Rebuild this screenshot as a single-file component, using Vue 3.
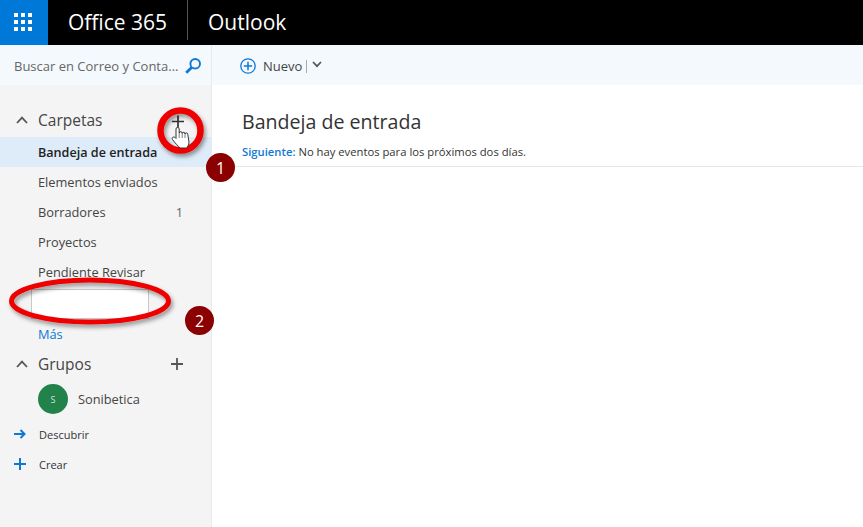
<script setup>
const folders = [
  { name: 'Bandeja de entrada', active: true },
  { name: 'Elementos enviados' },
  { name: 'Borradores', count: 1 },
  { name: 'Proyectos' },
  { name: 'Pendiente Revisar' }
]
</script>

<template>
  <div class="page">
    <header class="topbar">
      <div class="waffle">
        <svg width="18" height="18" viewBox="0 0 18 18" fill="#fff">
          <rect x="0" y="0" width="4" height="4" /><rect x="7" y="0" width="4" height="4" /><rect x="14" y="0" width="4" height="4" />
          <rect x="0" y="7" width="4" height="4" /><rect x="7" y="7" width="4" height="4" /><rect x="14" y="7" width="4" height="4" />
          <rect x="0" y="14" width="4" height="4" /><rect x="7" y="14" width="4" height="4" /><rect x="14" y="14" width="4" height="4" />
        </svg>
      </div>
      <div class="brand">Office 365</div>
      <div class="app">Outlook</div>
    </header>

    <div class="body">
      <aside class="sidebar">
        <div class="search">
          <span class="search_text">Buscar en Correo y Conta...</span>
          <svg width="16" height="16" viewBox="0 0 16 16" fill="none" stroke="#0f78d4">
            <circle cx="10.2" cy="5.8" r="4.8" stroke-width="1.9" />
            <path d="M6.6 9.4 1.2 14.8" stroke-width="2.8" />
          </svg>
        </div>

        <div class="section_head folders_head">
          <svg class="chevron" width="12" height="8" viewBox="0 0 12 8" fill="none" stroke="#555" stroke-width="1.8"><path d="M1 7l5-5.4L11 7" /></svg>
          <span class="section_title">Carpetas</span>
        </div>

        <div v-for="f in folders" :key="f.name" class="folder" :class="{ active: f.active }">
          <span>{{ f.name }}</span>
          <span v-if="f.count" class="count">{{ f.count }}</span>
        </div>

        <div class="new_folder"></div>
        <div class="more">Más</div>

        <div class="section_head groups_head">
          <svg class="chevron" width="12" height="8" viewBox="0 0 12 8" fill="none" stroke="#555" stroke-width="1.8"><path d="M1 7l5-5.4L11 7" /></svg>
          <span class="section_title">Grupos</span>
          <svg width="12" height="12" viewBox="0 0 12 12" stroke="#555" stroke-width="1.8"><path d="M6 0v12M0 6h12" /></svg>
        </div>

        <div class="group">
          <span class="avatar">S</span>
          <span class="group_name">Sonibetica</span>
        </div>

        <div class="link">
          <svg width="12" height="10" viewBox="0 0 12 10" fill="none" stroke="#0f78d4" stroke-width="2"><path d="M0 5h10.5M6.5 1l4 4-4 4" /></svg>
          <span>Descubrir</span>
        </div>
        <div class="link">
          <svg width="12" height="12" viewBox="0 0 12 12" stroke="#0f78d4" stroke-width="2"><path d="M6 0v12M0 6h12" /></svg>
          <span>Crear</span>
        </div>
      </aside>

      <main class="content">
        <div class="commands">
          <svg width="16" height="16" viewBox="0 0 16 16" fill="none" stroke="#0f78d4" stroke-width="1.3">
            <circle cx="8" cy="8" r="7.2" />
            <path d="M8 3.8v8.4M3.8 8h8.4" stroke-width="1.5" />
          </svg>
          <span class="new_label">Nuevo</span>
          <span class="divider"></span>
          <svg class="new_chevron" width="10" height="7" viewBox="0 0 10 7" fill="none" stroke="#555" stroke-width="1.7"><path d="M1 1l4 4.2L9 1" /></svg>
        </div>
        <div class="inbox_head">
          <h1>Bandeja de entrada</h1>
          <p><span class="next">Siguiente:</span> No hay eventos para los próximos dos días.</p>
        </div>
      </main>
    </div>

    <!-- red marks drawn over the screenshot -->
    <svg class="marks" width="863" height="527" viewBox="0 0 863 527" fill="none">
      <defs>
        <filter id="shadow" x="-20%" y="-20%" width="150%" height="150%">
          <feDropShadow dx="2" dy="3" stdDeviation="2" flood-color="#000" flood-opacity="0.4" />
        </filter>
      </defs>
      <path d="M172 121.5h12M178 115.5v12" stroke="#333" stroke-width="1.7" />
      <circle cx="180.5" cy="130.5" r="20" stroke="#ee0000" stroke-width="6.5" filter="url(#shadow)" />
      <ellipse cx="90" cy="301" rx="78.5" ry="21" stroke="#ee0000" stroke-width="5" filter="url(#shadow)" />
      <path d="M176 129a1.6 1.6 0 0 1 3.2 0V133a1.5 1.5 0 0 1 3 .5a1.4 1.4 0 0 1 2.8 .5a1.4 1.4 0 0 1 2.8 .7L189 142C189 145 187.5 147 186.5 148H180C178 146 175 143 172.5 139.5C171.5 138 173 136 175 137.5L176 138.5Z" fill="#fff" stroke="#333" stroke-width="1" />
      <path d="M179.2 133v5M182.2 133.5v4.5M185 134v4" stroke="#555" stroke-width=".8" />
    </svg>
    <div class="badge badge_one">1</div>
    <div class="badge badge_two">2</div>
  </div>
</template>

<style>
html, body { margin: 0; background: #fff; }
</style>

<style scoped>
.page {
  position: relative;
  width: 863px;
  height: 527px;
  overflow: hidden;
  font-family: "Open Sans", "Noto Sans", sans-serif;
  color: #333;
  display: flex;
  flex-direction: column;
}
.topbar {
  height: 45px;
  flex: none;
  background: #000;
  color: #fff;
  display: flex;
  align-items: flex-start;
}
.waffle {
  width: 48px;
  height: 45px;
  box-sizing: border-box;
  padding: 0 3px 2px 0;
  background: #0078d7;
  display: flex;
  align-items: center;
  justify-content: center;
}
.brand {
  font-size: 21px;
  padding: 0 20px;
  width: 99px;
  height: 40px;
  line-height: 45px;
  border-right: 1px solid #555;
  white-space: nowrap;
}
.app {
  font-size: 21px;
  line-height: 45px;
  padding-left: 20px;
}
.body {
  flex: 1;
  display: flex;
  min-height: 0;
}
.sidebar {
  width: 211px;
  flex: none;
  background: #f4f4f4;
  border-right: 1px solid #eaeaea;
  display: flex;
  flex-direction: column;
}
.search {
  height: 40px;
  box-sizing: border-box;
  background: #f4f9fd;
  display: flex;
  align-items: center;
  justify-content: space-between;
  padding: 2px 10px 0 14px;
  font-size: 13px;
  color: #666;
  flex: none;
}
.search_text { white-space: nowrap; }
.section_head {
  display: flex;
  align-items: center;
  padding: 0 28px 0 16px;
  height: 30px;
  flex: none;
}
.folders_head { margin: 20px 0 2px; }
.groups_head { margin: 4px 0 5px; }
.chevron { margin-right: 10px; }
.section_title {
  font-size: 15.5px;
  color: #444;
  flex: 1;
}
.folder {
  height: 30px;
  flex: none;
  display: flex;
  align-items: center;
  justify-content: space-between;
  padding: 0 28px 0 38px;
  font-size: 12.8px;
  color: #444;
}
.folder.active {
  background: #deecf9;
  color: #222;
  font-size: 12.6px;
  font-weight: 600;
}
.count { color: #666; }
.new_folder {
  box-sizing: border-box;
  margin: 2px 0 0 31px;
  width: 118px;
  height: 30px;
  background: #fff;
  border: 1px solid #c8c8c8;
  flex: none;
}
.more {
  font-size: 12.8px;
  color: #0f78d4;
  padding: 6px 0 0 38px;
  height: 20px;
  flex: none;
}
.group {
  display: flex;
  align-items: center;
  height: 30px;
  flex: none;
  padding-left: 38px;
}
.avatar {
  width: 30px;
  height: 30px;
  border-radius: 50%;
  background: #21824a;
  color: #ddd;
  font-size: 9px;
  display: flex;
  align-items: center;
  justify-content: center;
}
.group_name {
  font-size: 12.8px;
  color: #444;
  margin-left: 10px;
}
.link {
  height: 30px;
  flex: none;
  display: flex;
  align-items: center;
  font-size: 11px;
  color: #333;
  padding-left: 14px;
  gap: 13px;
}
.group + .link { margin-top: 5px; }
.content {
  flex: 1;
  display: flex;
  flex-direction: column;
}
.commands {
  height: 40px;
  box-sizing: border-box;
  flex: none;
  background: #f4f9fd;
  display: flex;
  align-items: center;
  padding: 2px 0 0 28px;
  font-size: 13px;
}
.new_label { margin-left: 7px; color: #444; }
.divider {
  width: 1px;
  height: 13px;
  background: #aaa;
  margin: 0 5px 0 4px;
}
.new_chevron { margin-bottom: 3px; }
.inbox_head {
  padding: 22px 0 0 30px;
  height: 59px;
  border-bottom: 1px solid #e6e6e6;
}
h1 {
  margin: 0;
  font-size: 19.6px;
  font-weight: 400;
  line-height: 30px;
  color: #333;
}
p {
  margin: 8px 0 0;
  font-size: 11.25px;
  line-height: 14px;
  color: #333;
}
.next { color: #0f78d4; font-weight: 600; }
.marks {
  position: absolute;
  left: 0;
  top: 0;
  pointer-events: none;
}
.badge {
  position: absolute;
  width: 29px;
  height: 29px;
  border-radius: 50%;
  background: #8b0000;
  color: #fff;
  font-size: 16px;
  display: flex;
  align-items: center;
  justify-content: center;
}
.badge_one { left: 206px; top: 153px; }
.badge_two { left: 185px; top: 306px; }
</style>
